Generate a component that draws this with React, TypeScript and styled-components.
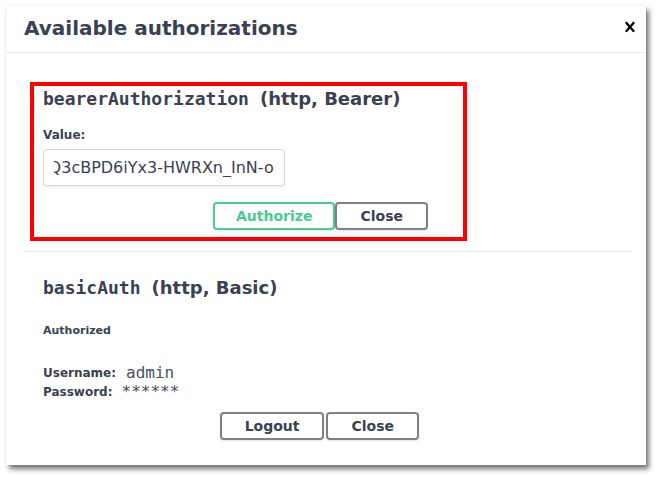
import React, { useEffect, useRef } from "react";
import styled, { createGlobalStyle } from "styled-components";

const GlobalStyle = createGlobalStyle`
  body {
    margin: 0;
    background: #fff;
    font-family: "DejaVu Sans", sans-serif;
    color: #3b4151;
  }
`;

const Page = styled.div`
  padding: 6px 0 12px 6px;
`;

const Modal = styled.div`
  width: 640px;
  height: 459px;
  background: #fff;
  box-shadow: 3px 4px 5px rgba(0, 0, 0, 0.55), 0 0 2px rgba(0, 0, 0, 0.08);
  display: flex;
  flex-direction: column;
`;

const Header = styled.div`
  height: 46px;
  display: flex;
  align-items: center;
  justify-content: space-between;
  padding: 0 6px 0 18px;
  border-bottom: 1px solid #ebebeb;
`;

const Title = styled.h3`
  margin: 0 0 2px;
  font-size: 20px;
  font-weight: 700;
  color: #3b4151;
`;

const CloseIcon = styled.button`
  border: none;
  background: none;
  padding: 0;
  width: 20px;
  height: 20px;
  margin-bottom: 5px;
  cursor: pointer;
  display: flex;
`;

const Body = styled.div`
  padding: 0 15px 0 19px;
`;

const Section = styled.div<{ $top: number; $bottom: number; $divider?: boolean }>`
  padding: ${(p) => p.$top}px 0 ${(p) => p.$bottom}px;
  border-bottom: ${(p) => (p.$divider ? "1px solid #ebebeb" : "none")};
`;

const Highlight = styled.div`
  margin-left: 5px;
  width: 437px;
  box-sizing: border-box;
  border: 4px solid #ff0000;
  padding: 2px 9px 7px;
`;

const Inner = styled.div`
  padding-left: 18px;
`;

const SchemeTitle = styled.h4`
  margin: 0;
  font-size: 18px;
  line-height: 22px;
  font-weight: 700;
  color: #3b4151;
`;

const Code = styled.code`
  font-family: "DejaVu Sans Mono", monospace;
  font-size: 18px;
  font-weight: 700;
  margin-right: 11px;
`;

const Label = styled.div<{ $size: number; $top: number }>`
  margin-top: ${(p) => p.$top}px;
  font-size: ${(p) => p.$size}px;
  line-height: 15px;
  font-weight: 700;
  color: #3b4151;
`;

const TokenInput = styled.input`
  display: block;
  margin-top: 6px;
  width: 242px;
  height: 37px;
  box-sizing: border-box;
  padding: 8px 10px;
  border: 1px solid #d9d9d9;
  border-radius: 4px;
  background: #fff;
  box-shadow: 0 1px 2px rgba(0, 0, 0, 0.1);
  font-family: "DejaVu Sans", sans-serif;
  font-size: 16px;
  color: #3b4151;
  outline: none;
`;

const Creds = styled.div`
  margin-top: 25px;
  display: flex;
  flex-direction: column;
`;

const CredRow = styled.div`
  height: 19px;
  display: flex;
  align-items: center;
`;

const CredKey = styled.span`
  font-size: 12px;
  font-weight: 700;
  color: #3b4151;
`;

const CredValue = styled.span<{ $left: number }>`
  margin-left: ${(p) => p.$left}px;
  font-family: "DejaVu Sans Mono", monospace;
  font-size: 16px;
  color: #4a4f5c;
`;

const ButtonRow = styled.div<{ $top: number; $right: number; $gap: number }>`
  margin-top: ${(p) => p.$top}px;
  display: flex;
  justify-content: flex-end;
  gap: ${(p) => p.$gap}px;
  padding-right: ${(p) => p.$right}px;
`;

const Btn = styled.button<{ $accent?: boolean }>`
  height: 28px;
  padding: 0 ${(p) => (p.$accent ? "21px" : "23px")};
  border: 2px solid ${(p) => (p.$accent ? "#49cc90" : "#808080")};
  border-radius: 4px;
  background: transparent;
  box-shadow: 0 1px 2px rgba(0, 0, 0, 0.1);
  font-family: "DejaVu Sans", sans-serif;
  font-size: 14px;
  font-weight: 700;
  color: ${(p) => (p.$accent ? "#49cc90" : "#3b4151")};
  cursor: pointer;
`;

const TOKEN = "eyJhbGciOiJIUzI1NiJ9.eyJzdWIiOiJhZG1pbiJ9.Q3cBPD6iYx3-HWRXn_InN-o";

export default function App() {
  const inputRef = useRef<HTMLInputElement>(null);

  useEffect(() => {
    const el = inputRef.current;
    if (el) el.scrollLeft = el.scrollWidth;
  }, []);

  return (
    <>
      <GlobalStyle />
      <Page>
        <Modal>
          <Header>
            <Title>Available authorizations</Title>
            <CloseIcon aria-label="Close">
              <svg width="20" height="20" viewBox="0 0 20 20">
                <path
                  fill="#000"
                  d="M14.348 14.849c-.469.469-1.229.469-1.697 0L10 11.819l-2.651 3.029c-.469.469-1.229.469-1.697 0-.469-.469-.469-1.229 0-1.697l2.758-3.15-2.759-3.152c-.469-.469-.469-1.228 0-1.697.469-.469 1.228-.469 1.697 0L10 8.183l2.651-3.031c.469-.469 1.228-.469 1.697 0 .469.469.469 1.229 0 1.697l-2.758 3.152 2.758 3.15c.469.469.469 1.229 0 1.698z"
                />
              </svg>
            </CloseIcon>
          </Header>
          <Body>
            <Section $top={29} $bottom={10} $divider>
              <Highlight>
                <SchemeTitle>
                  <Code>bearerAuthorization</Code>(http, Bearer)
                </SchemeTitle>
                <Label $size={12} $top={18}>
                  Value:
                </Label>
                <TokenInput ref={inputRef} type="text" defaultValue={TOKEN} />
                <ButtonRow $top={16} $right={26} $gap={0}>
                  <Btn $accent>Authorize</Btn>
                  <Btn>Close</Btn>
                </ButtonRow>
              </Highlight>
            </Section>
            <Section $top={25} $bottom={0}>
              <Inner>
                <SchemeTitle>
                  <Code>basicAuth</Code>(http, Basic)
                </SchemeTitle>
                <Label $size={11} $top={24}>
                  Authorized
                </Label>
                <Creds>
                  <CredRow>
                    <CredKey>Username:</CredKey>
                    <CredValue $left={10}>admin</CredValue>
                  </CredRow>
                  <CredRow>
                    <CredKey>Password:</CredKey>
                    <CredValue $left={9}>******</CredValue>
                  </CredRow>
                </Creds>
                <ButtonRow $top={11} $right={212} $gap={2}>
                  <Btn>Logout</Btn>
                  <Btn>Close</Btn>
                </ButtonRow>
              </Inner>
            </Section>
          </Body>
        </Modal>
      </Page>
    </>
  );
}
